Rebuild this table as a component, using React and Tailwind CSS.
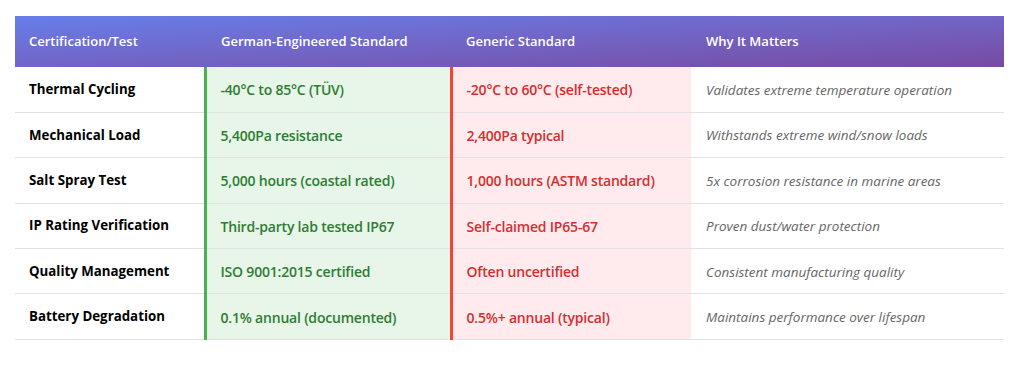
import React from 'react';

// Comparison rows: test name, German spec, generic spec, why it matters
const ROWS = [
    ['Thermal Cycling', '-40°C to 85°C (TÜV)', '-20°C to 60°C (self-tested)', 'Validates extreme temperature operation'],
    ['Mechanical Load', '5,400Pa resistance', '2,400Pa typical', 'Withstands extreme wind/snow loads'],
    ['Salt Spray Test', '5,000 hours (coastal rated)', '1,000 hours (ASTM standard)', '5x corrosion resistance in marine areas'],
    ['IP Rating Verification', 'Third-party lab tested IP67', 'Self-claimed IP65-67', 'Proven dust/water protection'],
    ['Quality Management', 'ISO 9001:2015 certified', 'Often uncertified', 'Consistent manufacturing quality'],
    ['Battery Degradation', '0.1% annual (documented)', '0.5%+ annual (typical)', 'Maintains performance over lifespan'],
];

const App = () => {
    return (
        <div className="bg-white w-[1024px] h-[377px] pt-4 px-[15px] font-['Open_Sans','Noto_Sans',sans-serif] text-[13.5px]">
            <table className="w-[989px] border-collapse table-fixed">
                <colgroup>
                    <col className="w-[190px]" />
                    <col className="w-[246px]" />
                    <col className="w-[240px]" />
                    <col className="w-[313px]" />
                </colgroup>
                <thead>
                    <tr className="bg-gradient-to-br from-[#667eea] to-[#764ba2] text-white text-[13px]">
                        <th className="h-[51px] px-[14px] text-left font-semibold">Certification/Test</th>
                        <th className="px-4 text-left font-semibold">German-Engineered Standard</th>
                        <th className="px-[15px] text-left font-semibold">Generic Standard</th>
                        <th className="px-[15px] text-left font-semibold">Why It Matters</th>
                    </tr>
                </thead>
                <tbody>
                    {ROWS.map((r, i) => (
                        <tr key={i} className="border-b border-[#e2e2e2]">
                            <td className="h-[45.4px] px-[14px] pt-px font-bold text-black text-[13.3px]">{r[0]}</td>
                            <td className="px-[14px] pt-px bg-[#e8f5e9] border-l-[3px] border-l-[#4caf50] text-[#2e7d32] font-semibold text-[14px] tracking-[-0.2px]">{r[1]}</td>
                            <td className="px-[14px] pt-px bg-[#ffebee] border-l-[3px] border-l-[#f44336] text-[#d32f2f] font-semibold text-[14px] tracking-[-0.2px]">{r[2]}</td>
                            <td className="px-[15px] pt-px italic text-[#666666]">{r[3]}</td>
                        </tr>
                    ))}
                </tbody>
            </table>
        </div>
    );
};

export default App;
